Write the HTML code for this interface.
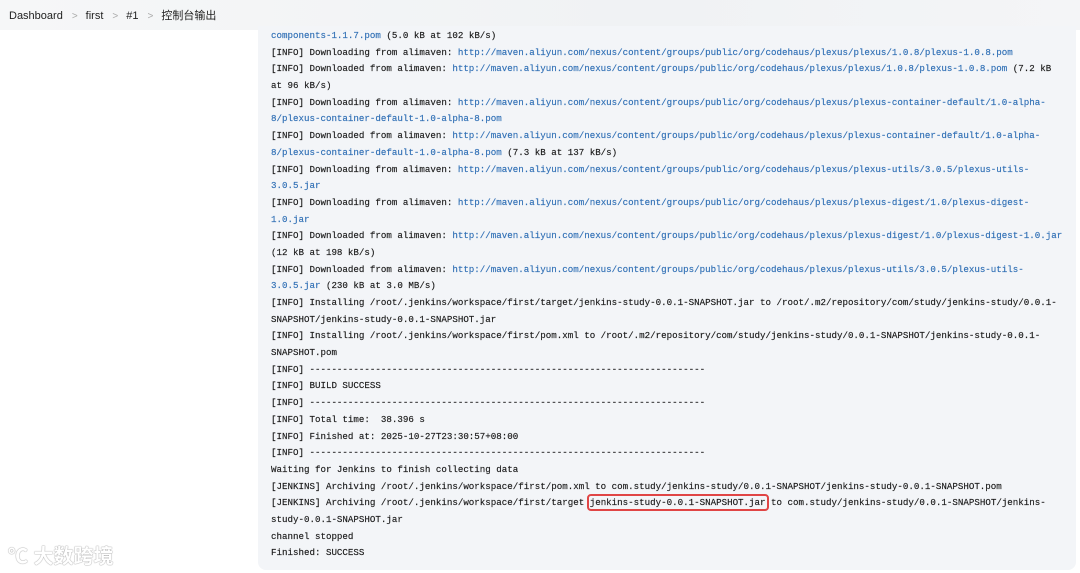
<!DOCTYPE html>
<html><head><meta charset="utf-8"><style>
body{margin:0;width:1080px;height:573px;background:#fff;overflow:hidden;position:relative;font-family:"Liberation Sans","Noto Sans CJK SC",sans-serif}
.hdr{position:absolute;left:0;top:0;width:1080px;height:30px;background:linear-gradient(90deg,#f6f7f8,#f0f2f4 60%,#f4f5f7)}
.bc{position:absolute;left:9px;top:7px;font-size:11px;color:#222;white-space:nowrap}
.bc span.s{color:#aaa;margin:0 8px 0 9px;font-size:10px}
.panel{position:absolute;left:258px;top:26px;width:818px;height:544px;background:#f3f5f8;border-radius:0 0 8px 8px}
pre{position:absolute;left:271px;top:28px;margin:0;font-family:"Liberation Mono",monospace;font-size:9.17px;line-height:16.68px;color:#1a1a1a;-webkit-text-stroke:0.15px #1a1a1a}
a{color:#2f6fb5;text-decoration:none;-webkit-text-stroke:0.15px #2f6fb5}
.box{outline:2px solid #e04545;outline-offset:1px;border-radius:1px}
.wm{position:absolute;left:8px;top:540px;font-size:20px;color:#fff;font-weight:bold;text-shadow:0 0 1px #999,0 0 1px #999}
</style></head><body>
<div class="hdr"></div>
<div class="bc">Dashboard<span class="s">&gt;</span>first<span class="s">&gt;</span>#1<span class="s">&gt;</span>控制台输出</div>
<div class="panel"></div>
<pre><a>components-1.1.7.pom</a> (5.0 kB at 102 kB/s)
[INFO] Downloading from alimaven: <a>http://maven.aliyun.com/nexus/content/groups/public/org/codehaus/plexus/plexus/1.0.8/plexus-1.0.8.pom</a>
[INFO] Downloaded from alimaven: <a>http://maven.aliyun.com/nexus/content/groups/public/org/codehaus/plexus/plexus/1.0.8/plexus-1.0.8.pom</a> (7.2 kB
at 96 kB/s)
[INFO] Downloading from alimaven: <a>http://maven.aliyun.com/nexus/content/groups/public/org/codehaus/plexus/plexus-container-default/1.0-alpha-
8/plexus-container-default-1.0-alpha-8.pom</a>
[INFO] Downloaded from alimaven: <a>http://maven.aliyun.com/nexus/content/groups/public/org/codehaus/plexus/plexus-container-default/1.0-alpha-
8/plexus-container-default-1.0-alpha-8.pom</a> (7.3 kB at 137 kB/s)
[INFO] Downloading from alimaven: <a>http://maven.aliyun.com/nexus/content/groups/public/org/codehaus/plexus/plexus-utils/3.0.5/plexus-utils-
3.0.5.jar</a>
[INFO] Downloading from alimaven: <a>http://maven.aliyun.com/nexus/content/groups/public/org/codehaus/plexus/plexus-digest/1.0/plexus-digest-
1.0.jar</a>
[INFO] Downloaded from alimaven: <a>http://maven.aliyun.com/nexus/content/groups/public/org/codehaus/plexus/plexus-digest/1.0/plexus-digest-1.0.jar</a>
(12 kB at 198 kB/s)
[INFO] Downloaded from alimaven: <a>http://maven.aliyun.com/nexus/content/groups/public/org/codehaus/plexus/plexus-utils/3.0.5/plexus-utils-
3.0.5.jar</a> (230 kB at 3.0 MB/s)
[INFO] Installing /root/.jenkins/workspace/first/target/jenkins-study-0.0.1-SNAPSHOT.jar to /root/.m2/repository/com/study/jenkins-study/0.0.1-
SNAPSHOT/jenkins-study-0.0.1-SNAPSHOT.jar
[INFO] Installing /root/.jenkins/workspace/first/pom.xml to /root/.m2/repository/com/study/jenkins-study/0.0.1-SNAPSHOT/jenkins-study-0.0.1-
SNAPSHOT.pom
[INFO] ------------------------------------------------------------------------
[INFO] BUILD SUCCESS
[INFO] ------------------------------------------------------------------------
[INFO] Total time:  38.396 s
[INFO] Finished at: 2025-10-27T23:30:57+08:00
[INFO] ------------------------------------------------------------------------
Waiting for Jenkins to finish collecting data
[JENKINS] Archiving /root/.jenkins/workspace/first/pom.xml to com.study/jenkins-study/0.0.1-SNAPSHOT/jenkins-study-0.0.1-SNAPSHOT.pom
[JENKINS] Archiving /root/.jenkins/workspace/first/target <span class="box">jenkins-study-0.0.1-SNAPSHOT.jar</span> to com.study/jenkins-study/0.0.1-SNAPSHOT/jenkins-
study-0.0.1-SNAPSHOT.jar
channel stopped
Finished: SUCCESS</pre>
<div class="wm">℃ 大数跨境</div>
</body></html>
